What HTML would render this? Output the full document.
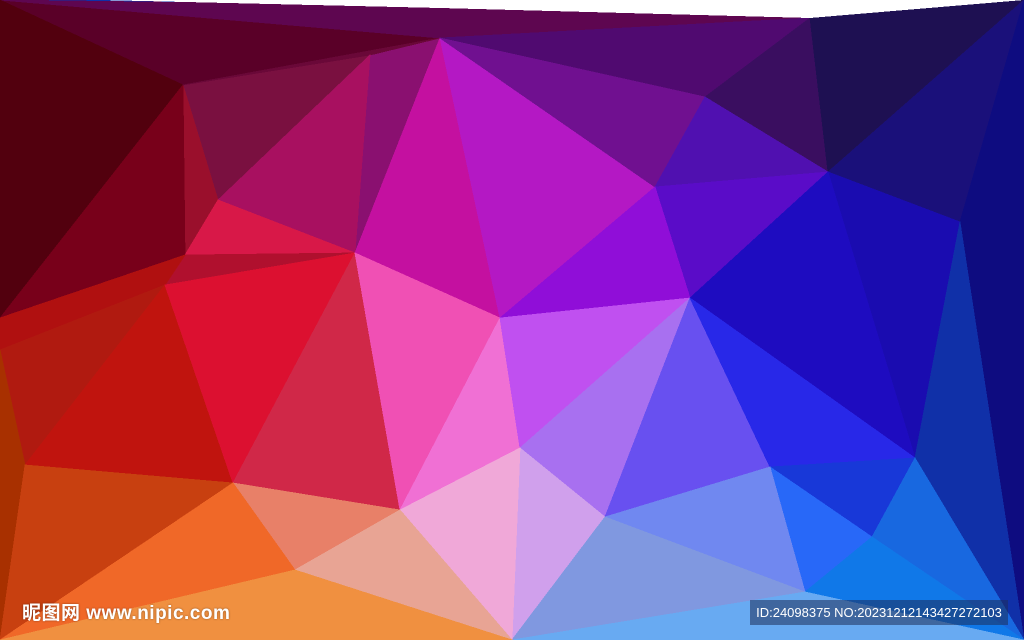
<!DOCTYPE html>
<html><head><meta charset="utf-8"><style>
html,body{margin:0;padding:0;width:1024px;height:640px;overflow:hidden;background:#fff}
svg{position:absolute;left:0;top:0}
.wm{position:absolute;left:22px;top:598px;color:#fff;font:bold 19px "Liberation Sans","Noto Sans CJK SC",sans-serif;letter-spacing:0.5px;text-shadow:0 0 2px rgba(0,0,0,.4)}
.id{position:absolute;left:750px;top:600px;width:258px;height:25px;background:rgba(30,45,90,.55);color:#fff;font:13px "Liberation Sans",sans-serif;line-height:25px;text-align:center}
</style></head><body>
<svg width="1024" height="640" viewBox="0 0 1024 640" shape-rendering="crispEdges">
<g stroke-width="0.8" stroke-linejoin="round">
<polygon points="0,0 1024,0 1024,640 0,640" fill="#1030a8" stroke="none"/>
<polygon points="0,0 440,38 183,85" fill="#5a0028" stroke="#5a0028"/>
<polygon points="0,0 300,4 810,18 440,38" fill="#5e0650" stroke="#5e0650"/>
<polygon points="0,0 183,85 0,318" fill="#52000e" stroke="#52000e"/>
<polygon points="183,85 370,55 218,200" fill="#7a1040" stroke="#7a1040"/>
<polygon points="183,85 218,200 185,255" fill="#9a0f2c" stroke="#9a0f2c"/>
<polygon points="0,318 183,85 185,255" fill="#78001a" stroke="#78001a"/>
<polygon points="370,55 440,38 355,253" fill="#8a1070" stroke="#8a1070"/>
<polygon points="183,85 440,38 370,55" fill="#6a0838" stroke="#6a0838"/>
<polygon points="218,200 370,55 355,253" fill="#a81060" stroke="#a81060"/>
<polygon points="440,38 500,318 355,253" fill="#c410a0" stroke="#c410a0"/>
<polygon points="440,38 655,187 500,318" fill="#b418c4" stroke="#b418c4"/>
<polygon points="440,38 810,18 705,97" fill="#500a70" stroke="#500a70"/>
<polygon points="440,38 705,97 655,187" fill="#701090" stroke="#701090"/>
<polygon points="705,97 810,18 828,172" fill="#3a0e60" stroke="#3a0e60"/>
<polygon points="810,18 1024,0 828,172" fill="#1e1052" stroke="#1e1052"/>
<polygon points="828,172 1024,0 960,222" fill="#1a107a" stroke="#1a107a"/>
<polygon points="1024,0 1024,640 960,222" fill="#0e0c80" stroke="#0e0c80"/>
<polygon points="705,97 828,172 655,187" fill="#5010b0" stroke="#5010b0"/>
<polygon points="655,187 828,172 690,298" fill="#5a0cc8" stroke="#5a0cc8"/>
<polygon points="655,187 690,298 500,318" fill="#900ed8" stroke="#900ed8"/>
<polygon points="828,172 960,222 915,458" fill="#1a0cb0" stroke="#1a0cb0"/>
<polygon points="828,172 915,458 690,298" fill="#1e0cc0" stroke="#1e0cc0"/>
<polygon points="218,200 355,253 185,255" fill="#d81848" stroke="#d81848"/>
<polygon points="185,255 355,253 165,285" fill="#b0102e" stroke="#b0102e"/>
<polygon points="0,318 185,255 165,285 0,350" fill="#b01010" stroke="#b01010"/>
<polygon points="0,350 165,285 25,465" fill="#b01a10" stroke="#b01a10"/>
<polygon points="0,350 25,465 0,640" fill="#a83000" stroke="#a83000"/>
<polygon points="165,285 233,483 25,465" fill="#c0140e" stroke="#c0140e"/>
<polygon points="165,285 355,253 233,483" fill="#dc1030" stroke="#dc1030"/>
<polygon points="355,253 400,510 233,483" fill="#d02848" stroke="#d02848"/>
<polygon points="355,253 500,318 400,510" fill="#f050b4" stroke="#f050b4"/>
<polygon points="500,318 520,448 400,510" fill="#f070d4" stroke="#f070d4"/>
<polygon points="500,318 690,298 520,448" fill="#c050f0" stroke="#c050f0"/>
<polygon points="690,298 605,517 520,448" fill="#a870f0" stroke="#a870f0"/>
<polygon points="690,298 770,467 605,517" fill="#6850f0" stroke="#6850f0"/>
<polygon points="690,298 915,458 770,467" fill="#2828e8" stroke="#2828e8"/>
<polygon points="770,467 915,458 872,537" fill="#1838d8" stroke="#1838d8"/>
<polygon points="770,467 872,537 805,592" fill="#2868f8" stroke="#2868f8"/>
<polygon points="960,222 1024,640 915,458" fill="#1030a8" stroke="#1030a8"/>
<polygon points="915,458 1024,640 872,537" fill="#1868e0" stroke="#1868e0"/>
<polygon points="872,537 1024,640 805,592" fill="#1078e8" stroke="#1078e8"/>
<polygon points="605,517 770,467 805,592" fill="#7088f0" stroke="#7088f0"/>
<polygon points="520,448 605,517 512,640" fill="#d0a0ec" stroke="#d0a0ec"/>
<polygon points="605,517 805,592 512,640" fill="#8098e0" stroke="#8098e0"/>
<polygon points="805,592 1024,640 512,640" fill="#68aaf2" stroke="#68aaf2"/>
<polygon points="400,510 520,448 512,640" fill="#f0a8d8" stroke="#f0a8d8"/>
<polygon points="233,483 400,510 295,570" fill="#e88068" stroke="#e88068"/>
<polygon points="400,510 512,640 295,570" fill="#e8a494" stroke="#e8a494"/>
<polygon points="25,465 233,483 0,640" fill="#c84010" stroke="#c84010"/>
<polygon points="233,483 295,570 0,640" fill="#f06828" stroke="#f06828"/>
<polygon points="295,570 512,640 0,640" fill="#f09040" stroke="#f09040"/>
<polygon points="100,0 1024,0 810,18 440,8" fill="#fff" stroke="none"/>
</g>
</svg>
<div class="wm">昵图网 www.nipic.com</div>
<div class="id">ID:24098375 NO:20231212143427272103</div>
</body></html>
